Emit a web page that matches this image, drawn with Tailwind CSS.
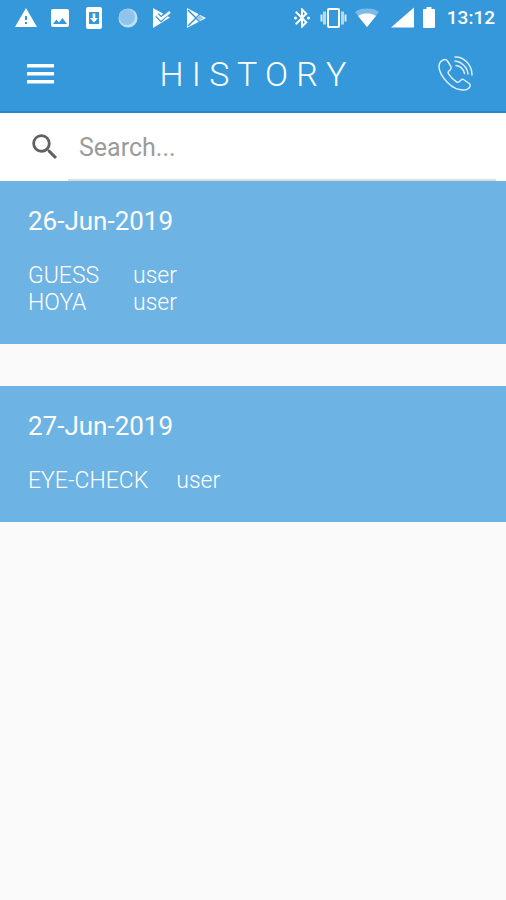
<!DOCTYPE html>
<html lang="en">
<head>
<meta charset="utf-8">
<meta name="viewport" content="width=device-width, initial-scale=1">
<title>History</title>
<script src="https://cdn.jsdelivr.net/npm/@tailwindcss/browser@4"></script>
</head>
<body class="min-h-screen bg-[#fafafa] font-['Roboto',sans-serif] text-white">
<header class="border-b-2 border-[#2288cd] bg-[#3498db]">
  <div class="flex h-9 items-center justify-between pr-[11px] pl-[14px]">
    <div class="flex items-center gap-[10px]">
      <svg class="size-6" viewBox="0 0 24 24" fill="currentColor" aria-hidden="true"><path d="M1 21h22L12 2 1 21zm12-3h-2v-2h2v2zm0-4h-2v-4h2v4z"/></svg>
      <svg class="size-6" viewBox="0 0 24 24" fill="currentColor" aria-hidden="true"><path d="M21 19V5a2 2 0 0 0-2-2H5a2 2 0 0 0-2 2v14a2 2 0 0 0 2 2h14a2 2 0 0 0 2-2zM8.500 13.500l2.500 3 3.500-4.500 4.500 6H5z"/></svg>
      <svg class="size-6" viewBox="0 0 24 24" fill="currentColor" aria-hidden="true"><path fill-rule="evenodd" d="M6 1h12a2 2 0 0 1 2 2v18a2 2 0 0 1-2 2H6a2 2 0 0 1-2-2V3a2 2 0 0 1 2-2zm1 5v12h10V6z"/><path d="M10.700 7.500h2.600V12H16l-4 4.500L8 12h2.700z"/></svg>
      <svg class="size-6" viewBox="0 0 24 24" aria-hidden="true"><circle cx="12" cy="12" r="9.500" fill="#c4e0f5"/><circle cx="11" cy="11" r="8" fill="#8fc5ec"/></svg>
      <svg class="size-6" viewBox="0 0 24 24" aria-hidden="true"><path d="M3 2l17 9.500L3 22z" fill="#fff"/><path d="M7 9l4 4 10-9" fill="none" stroke="#3498db" stroke-width="5"/><path d="M7 9l4 4 9-7" fill="none" stroke="#fff" stroke-width="2.500"/></svg>
      <svg class="size-6" viewBox="0 0 24 24" aria-hidden="true"><path d="M3 2l19 10L3 22z" fill="#fff"/><path d="M4 4l12 12M4 20L16 8" fill="none" stroke="#3498db" stroke-width="1.500"/><path d="M15.500 9l4 3-4 3-3-3z" fill="#9dcbed"/></svg>
    </div>
    <div class="flex items-center gap-2">
      <svg class="h-6 w-5" viewBox="2 0 20 24" fill="currentColor" aria-hidden="true"><path d="M17.710 7.710L12 2h-1v7.590L6.410 5 5 6.410 10.590 12 5 17.590 6.410 19 11 14.410V22h1l5.710-5.710-4.300-4.290 4.300-4.290zM13 5.830l1.880 1.880L13 9.590V5.830zm1.880 10.460L13 18.170v-3.760l1.880 1.880z"/><circle cx="5.500" cy="12" r="1.500"/><circle cx="18.500" cy="12" r="1.500"/></svg>
      <svg class="h-6 w-[27px]" viewBox="0 0 27 24" aria-hidden="true"><rect x="8" y="3" width="11" height="18" rx="1" fill="none" stroke="#fff" stroke-width="2"/><path d="M4.500 5.500v13M22.500 5.500v13" stroke="#b5d9f3" stroke-width="3"/><path d="M1.500 8.500v7M25.500 8.500v7" stroke="#d6eaf8" stroke-width="2"/></svg>
      <svg class="size-6" viewBox="0 0 24 24" aria-hidden="true"><path d="M12 21L0 6C3 3.500 7 2.500 12 2.500s9 1 12 3.500z" fill="#7dbbe8"/><path d="M12 21L3 10C6 8 9 7.500 12 7.500s6 .5 9 2.500z" fill="#fff"/></svg>
      <svg class="h-6 w-7" viewBox="0 0 28 24" fill="currentColor" aria-hidden="true"><path d="M4 21.500L27 1.500v20z"/></svg>
      <svg class="h-6 w-3" viewBox="0 0 12 24" fill="currentColor" aria-hidden="true"><path d="M3.500 1h5v2H11a1 1 0 0 1 1 1v17a1 1 0 0 1-1 1H1a1 1 0 0 1-1-1V4a1 1 0 0 1 1-1h2.500z"/></svg>
      <time class="pl-1 text-[19px] leading-6 font-medium">13:12</time>
    </div>
  </div>
  <div class="grid h-[75px] grid-cols-[1fr_auto_1fr] items-center px-6">
    <button type="button" aria-label="Open menu" class="flex size-8 items-center justify-center">
      <svg class="h-5 w-[27px]" viewBox="0 0 27 20" fill="currentColor" aria-hidden="true"><path d="M0 0h27v3.500H0zM0 8h27v3.500H0zM0 16h27v3.500H0z"/></svg>
    </button>
    <h1 class="text-[34px] leading-10 font-light">H I S T O R Y</h1>
    <button type="button" aria-label="Call" class="mr-2 size-9 justify-self-end">
      <svg class="size-9" viewBox="0 0 36 36" fill="none" stroke="#dceefb" stroke-width="1.500" stroke-linecap="round" stroke-linejoin="round" aria-hidden="true"><path d="M5 4C3 5 1 7.500 1 10.500c0 5 4 11.500 9 16.500s10.500 7 15.500 7c3 0 5.500-1.500 6.500-3.500.7-1.300.3-2.200-.7-3l-5-3.500c-1.300-1-2.500-.8-3.500.2l-1.300 1.300c-1 1-2 1-3 .3-3-2-5.800-4.800-8-8-.7-1-.6-2 .3-2.800l1.500-1.200c1-1 1.200-2.200.5-3.500L9.500 5C8.500 3.500 6.500 3.200 5 4z"/><path d="M17 1C26 .5 34 9 34 19M17 5c6.500 .5 12.500 6.500 13 13M18 9.500c4.500 .5 7.500 4 8.500 8"/></svg>
    </button>
  </div>
</header>
<main>
  <form role="search" class="flex h-[68px] items-stretch bg-white pr-[10px] pl-7">
    <label for="search" class="flex w-10 items-center">
      <svg role="img" aria-label="Search history" class="size-[34px]" viewBox="0 0 24 24" fill="#616161"><path d="M15.500 14h-.790l-.280-.270A6.471 6.471 0 0 0 16 9.500 6.500 6.500 0 1 0 9.500 16c1.610 0 3.090-.590 4.230-1.570l.270.280v.790l5 4.990L20.490 19l-4.990-5zm-6 0C7.010 14 5 11.990 5 9.500S7.010 5 9.500 5 14 7.010 14 9.500 11.990 14 9.500 14z"/></svg>
    </label>
    <input id="search" type="search" placeholder="Search..." class="min-w-0 flex-1 border-b-2 border-[#dcdcdc] px-[11px] pt-1 text-[25px] text-gray-700 outline-none placeholder:text-[#9b9b9b]">
  </form>
  <div class="flex flex-col gap-[42px]">
    <section class="bg-[#6db3e3] px-7 pt-6 pb-7">
      <h2 class="text-[26px] leading-8">26-Jun-2019</h2>
      <table class="mt-[25px] text-left text-[23px] leading-[27px]">
        <tbody>
          <tr><th scope="row" class="min-w-[105px] pr-7 font-light">GUESS</th><td class="font-light">user</td></tr>
          <tr><th scope="row" class="min-w-[105px] pr-7 font-light">HOYA</th><td class="font-light">user</td></tr>
        </tbody>
      </table>
    </section>
    <section class="bg-[#6db3e3] px-7 pt-6 pb-7">
      <h2 class="text-[26px] leading-8">27-Jun-2019</h2>
      <table class="mt-[25px] text-left text-[23px] leading-[27px]">
        <tbody>
          <tr><th scope="row" class="min-w-[105px] pr-7 font-light">EYE-CHECK</th><td class="font-light">user</td></tr>
        </tbody>
      </table>
    </section>
  </div>
</main>
</body>
</html>
